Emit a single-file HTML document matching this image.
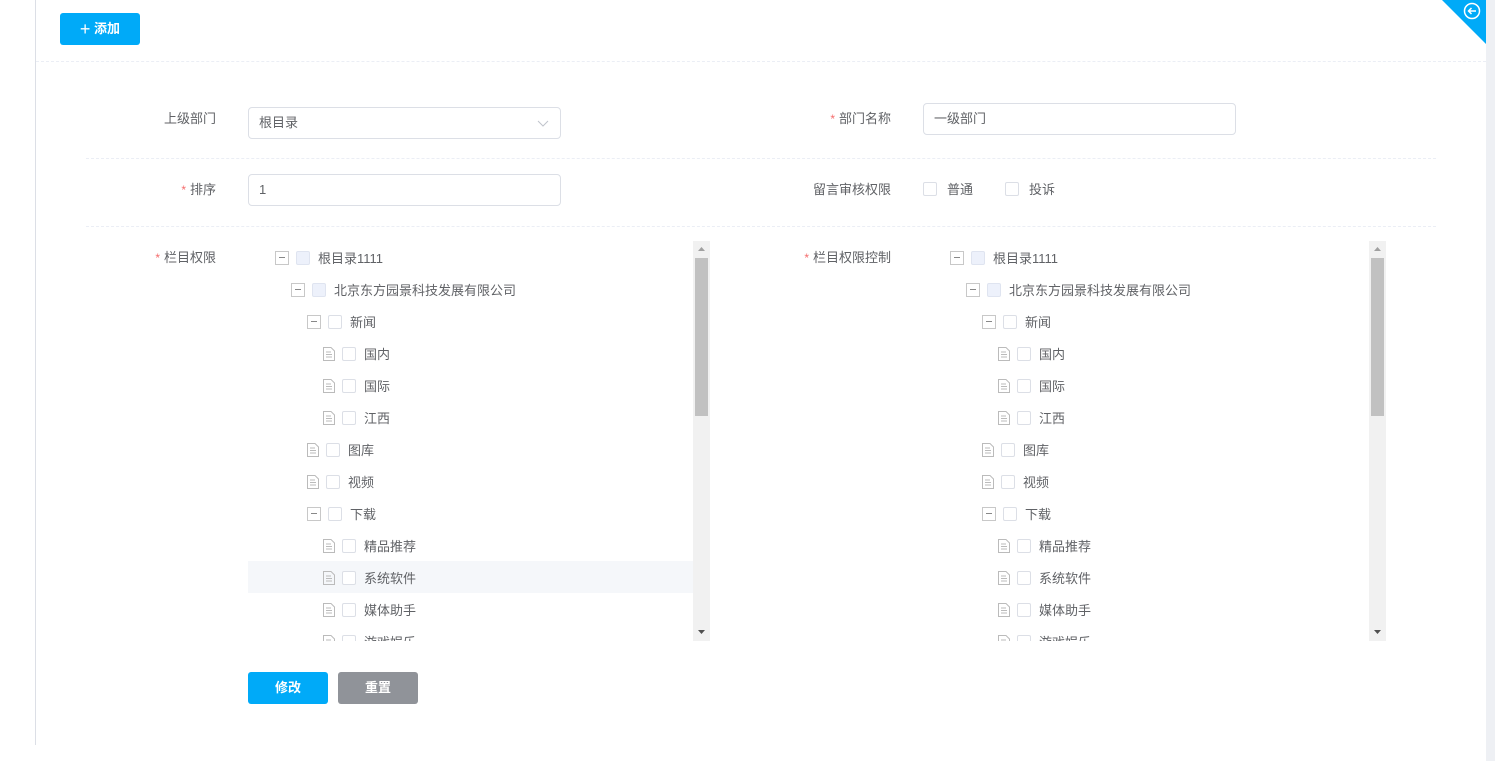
<!DOCTYPE html>
<html><head><meta charset="utf-8"><style>
*{box-sizing:border-box;margin:0;padding:0}
body{width:1495px;height:761px;background:#fff;font-family:"Liberation Sans","Noto Sans CJK SC",sans-serif;font-size:13px;color:#606266;position:relative;overflow:hidden}
.abs{position:absolute}
.vline{left:35px;top:0;width:1px;height:745px;background:#dcdfe6}
.rstrip{left:1486px;top:0;width:9px;height:761px;background:#eef0f4}
.dash{height:0;border-top:1px dashed #ebeef5}
.btn{border-radius:3px;color:#fff;text-align:center;font-size:13px;font-weight:bold}
.lbl{text-align:right;width:160px;line-height:20px}
.star{color:#f56c6c;margin-right:4px;font-size:12px}
.inp{border:1px solid #dcdfe6;border-radius:4px;height:32px;line-height:30px;padding-left:10px;color:#606266}
.tree{overflow:hidden;height:400px;width:445px}
.row{height:32px;display:flex;align-items:center;color:#606266}
.row>*{position:relative;top:1px}
.tg{width:14px;height:14px;border:1px solid #c8c8c8;position:relative;flex:none}
.tg:after{content:"";position:absolute;left:3px;top:5px;width:6px;height:1px;background:#888}
.cb{width:14px;height:14px;border:1px solid #dcdfe6;border-radius:2px;margin-left:7px;flex:none;background:#fff}
.cb.ind{background:#edf1fb;border-color:#dfe4f0}
.fi{width:12px;height:14px;flex:none}
.tx{margin-left:8px;white-space:nowrap;top:0}
.sb{width:17px;height:400px;background:#f1f1f1}
.thumb{position:absolute;left:2px;top:17px;width:13px;height:158px;background:#c1c1c1}
.hl{background:#f5f7fa}
</style></head><body>
<div class="abs vline"></div>
<div class="abs rstrip"></div>
<svg class="abs" style="left:1442px;top:0" width="44" height="44"><polygon points="0,0 44,0 44,44" fill="#00aaf8"/><circle cx="30" cy="11" r="7.5" fill="none" stroke="#fff" stroke-width="1.5"/><path d="M34 11H26.5M29.5 8L26.5 11L29.5 14" fill="none" stroke="#fff" stroke-width="1.5"/></svg>
<div class="abs btn" style="left:60px;top:13px;width:80px;height:32px;line-height:32px;background:#00aaf8"><span style="font-size:18px;font-weight:normal;vertical-align:-2px">+</span> 添加</div>
<div class="abs dash" style="left:36px;top:61px;width:1450px"></div>

<div class="abs lbl" style="left:56px;top:109px">上级部门</div>
<div class="abs inp" style="left:248px;top:107px;width:313px">根目录<svg class="abs" style="right:11px;top:12px" width="12" height="7"><path d="M1 1L6 6L11 1" fill="none" stroke="#c0c4cc" stroke-width="1"/></svg></div>
<div class="abs lbl" style="left:731px;top:109px"><span class="star">*</span>部门名称</div>
<div class="abs inp" style="left:923px;top:103px;width:313px">一级部门</div>
<div class="abs dash" style="left:86px;top:158px;width:1350px"></div>

<div class="abs lbl" style="left:56px;top:180px"><span class="star">*</span>排序</div>
<div class="abs inp" style="left:248px;top:174px;width:313px">1</div>
<div class="abs lbl" style="left:731px;top:180px">留言审核权限</div>
<div class="abs" style="left:923px;top:182px;width:14px;height:14px;border:1px solid #dcdfe6;border-radius:2px"></div>
<div class="abs" style="left:947px;top:180px;line-height:20px">普通</div>
<div class="abs" style="left:1005px;top:182px;width:14px;height:14px;border:1px solid #dcdfe6;border-radius:2px"></div>
<div class="abs" style="left:1029px;top:180px;line-height:20px">投诉</div>
<div class="abs dash" style="left:86px;top:226px;width:1350px"></div>

<div class="abs lbl" style="left:56px;top:248px"><span class="star">*</span>栏目权限</div>
<div class="abs lbl" style="left:731px;top:248px"><span class="star">*</span>栏目权限控制</div>

<div class="abs tree" style="left:248px;top:241px">
<div class="row" style="padding-left:27px"><span class="tg"></span><span class="cb ind"></span><span class="tx">根目录1111</span></div>
<div class="row" style="padding-left:43px"><span class="tg"></span><span class="cb ind"></span><span class="tx">北京东方园景科技发展有限公司</span></div>
<div class="row" style="padding-left:59px"><span class="tg"></span><span class="cb"></span><span class="tx">新闻</span></div>
<div class="row" style="padding-left:75px"><svg class="fi" viewBox="0 0 12 14"><path d="M0.5 0.5H8L11.5 4V13.5H0.5Z M3 5H8M3 7.5H9M3 10H9" fill="none" stroke="#bbb"/></svg><span class="cb"></span><span class="tx">国内</span></div>
<div class="row" style="padding-left:75px"><svg class="fi" viewBox="0 0 12 14"><path d="M0.5 0.5H8L11.5 4V13.5H0.5Z M3 5H8M3 7.5H9M3 10H9" fill="none" stroke="#bbb"/></svg><span class="cb"></span><span class="tx">国际</span></div>
<div class="row" style="padding-left:75px"><svg class="fi" viewBox="0 0 12 14"><path d="M0.5 0.5H8L11.5 4V13.5H0.5Z M3 5H8M3 7.5H9M3 10H9" fill="none" stroke="#bbb"/></svg><span class="cb"></span><span class="tx">江西</span></div>
<div class="row" style="padding-left:59px"><svg class="fi" viewBox="0 0 12 14"><path d="M0.5 0.5H8L11.5 4V13.5H0.5Z M3 5H8M3 7.5H9M3 10H9" fill="none" stroke="#bbb"/></svg><span class="cb"></span><span class="tx">图库</span></div>
<div class="row" style="padding-left:59px"><svg class="fi" viewBox="0 0 12 14"><path d="M0.5 0.5H8L11.5 4V13.5H0.5Z M3 5H8M3 7.5H9M3 10H9" fill="none" stroke="#bbb"/></svg><span class="cb"></span><span class="tx">视频</span></div>
<div class="row" style="padding-left:59px"><span class="tg"></span><span class="cb"></span><span class="tx">下载</span></div>
<div class="row" style="padding-left:75px"><svg class="fi" viewBox="0 0 12 14"><path d="M0.5 0.5H8L11.5 4V13.5H0.5Z M3 5H8M3 7.5H9M3 10H9" fill="none" stroke="#bbb"/></svg><span class="cb"></span><span class="tx">精品推荐</span></div>
<div class="row hl" style="padding-left:75px"><svg class="fi" viewBox="0 0 12 14"><path d="M0.5 0.5H8L11.5 4V13.5H0.5Z M3 5H8M3 7.5H9M3 10H9" fill="none" stroke="#bbb"/></svg><span class="cb"></span><span class="tx">系统软件</span></div>
<div class="row" style="padding-left:75px"><svg class="fi" viewBox="0 0 12 14"><path d="M0.5 0.5H8L11.5 4V13.5H0.5Z M3 5H8M3 7.5H9M3 10H9" fill="none" stroke="#bbb"/></svg><span class="cb"></span><span class="tx">媒体助手</span></div>
<div class="row" style="padding-left:75px"><svg class="fi" viewBox="0 0 12 14"><path d="M0.5 0.5H8L11.5 4V13.5H0.5Z M3 5H8M3 7.5H9M3 10H9" fill="none" stroke="#bbb"/></svg><span class="cb"></span><span class="tx">游戏娱乐</span></div>
</div>
<div class="abs sb" style="left:693px;top:241px"><div class="thumb"></div><svg class="abs" style="left:5px;top:6px" width="7" height="5"><path d="M0 4L3.5 0L7 4Z" fill="#a0a0a0"/></svg><svg class="abs" style="left:5px;top:389px" width="7" height="5"><path d="M0 0L3.5 4L7 0Z" fill="#505050"/></svg></div>

<div class="abs tree" style="left:923px;top:241px">
<div class="row" style="padding-left:27px"><span class="tg"></span><span class="cb ind"></span><span class="tx">根目录1111</span></div>
<div class="row" style="padding-left:43px"><span class="tg"></span><span class="cb ind"></span><span class="tx">北京东方园景科技发展有限公司</span></div>
<div class="row" style="padding-left:59px"><span class="tg"></span><span class="cb"></span><span class="tx">新闻</span></div>
<div class="row" style="padding-left:75px"><svg class="fi" viewBox="0 0 12 14"><path d="M0.5 0.5H8L11.5 4V13.5H0.5Z M3 5H8M3 7.5H9M3 10H9" fill="none" stroke="#bbb"/></svg><span class="cb"></span><span class="tx">国内</span></div>
<div class="row" style="padding-left:75px"><svg class="fi" viewBox="0 0 12 14"><path d="M0.5 0.5H8L11.5 4V13.5H0.5Z M3 5H8M3 7.5H9M3 10H9" fill="none" stroke="#bbb"/></svg><span class="cb"></span><span class="tx">国际</span></div>
<div class="row" style="padding-left:75px"><svg class="fi" viewBox="0 0 12 14"><path d="M0.5 0.5H8L11.5 4V13.5H0.5Z M3 5H8M3 7.5H9M3 10H9" fill="none" stroke="#bbb"/></svg><span class="cb"></span><span class="tx">江西</span></div>
<div class="row" style="padding-left:59px"><svg class="fi" viewBox="0 0 12 14"><path d="M0.5 0.5H8L11.5 4V13.5H0.5Z M3 5H8M3 7.5H9M3 10H9" fill="none" stroke="#bbb"/></svg><span class="cb"></span><span class="tx">图库</span></div>
<div class="row" style="padding-left:59px"><svg class="fi" viewBox="0 0 12 14"><path d="M0.5 0.5H8L11.5 4V13.5H0.5Z M3 5H8M3 7.5H9M3 10H9" fill="none" stroke="#bbb"/></svg><span class="cb"></span><span class="tx">视频</span></div>
<div class="row" style="padding-left:59px"><span class="tg"></span><span class="cb"></span><span class="tx">下载</span></div>
<div class="row" style="padding-left:75px"><svg class="fi" viewBox="0 0 12 14"><path d="M0.5 0.5H8L11.5 4V13.5H0.5Z M3 5H8M3 7.5H9M3 10H9" fill="none" stroke="#bbb"/></svg><span class="cb"></span><span class="tx">精品推荐</span></div>
<div class="row" style="padding-left:75px"><svg class="fi" viewBox="0 0 12 14"><path d="M0.5 0.5H8L11.5 4V13.5H0.5Z M3 5H8M3 7.5H9M3 10H9" fill="none" stroke="#bbb"/></svg><span class="cb"></span><span class="tx">系统软件</span></div>
<div class="row" style="padding-left:75px"><svg class="fi" viewBox="0 0 12 14"><path d="M0.5 0.5H8L11.5 4V13.5H0.5Z M3 5H8M3 7.5H9M3 10H9" fill="none" stroke="#bbb"/></svg><span class="cb"></span><span class="tx">媒体助手</span></div>
<div class="row" style="padding-left:75px"><svg class="fi" viewBox="0 0 12 14"><path d="M0.5 0.5H8L11.5 4V13.5H0.5Z M3 5H8M3 7.5H9M3 10H9" fill="none" stroke="#bbb"/></svg><span class="cb"></span><span class="tx">游戏娱乐</span></div>
</div>
<div class="abs sb" style="left:1369px;top:241px"><div class="thumb"></div><svg class="abs" style="left:5px;top:6px" width="7" height="5"><path d="M0 4L3.5 0L7 4Z" fill="#a0a0a0"/></svg><svg class="abs" style="left:5px;top:389px" width="7" height="5"><path d="M0 0L3.5 4L7 0Z" fill="#505050"/></svg></div>

<div class="abs btn" style="left:248px;top:672px;width:80px;height:32px;line-height:32px;background:#00aaf8">修改</div>
<div class="abs btn" style="left:338px;top:672px;width:80px;height:32px;line-height:32px;background:#909399">重置</div>
</body></html>
